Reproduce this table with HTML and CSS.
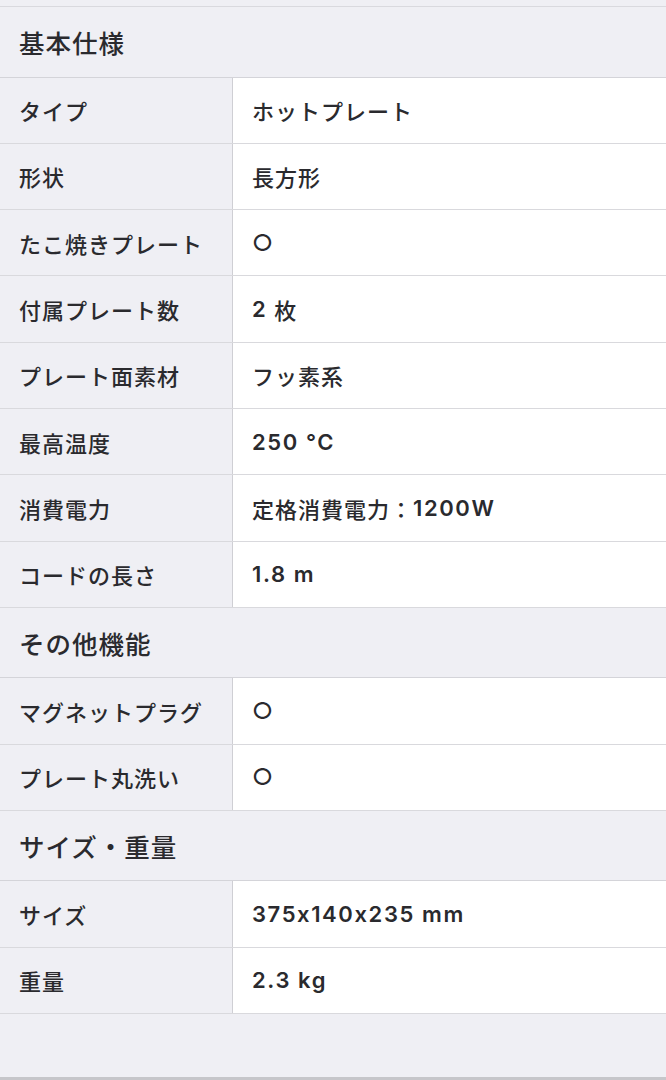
FILE: index.html
```html
<!DOCTYPE html>
<html lang="ja">
<head>
<meta charset="utf-8">
<link rel="stylesheet" href="styles.css">
</head>
<body>
<div class="spec">
  <section class="group">
    <h2 class="group-title">基本仕様</h2>
    <div class="row"><div class="label">タイプ</div><div class="value">ホットプレート</div></div>
    <div class="row"><div class="label">形状</div><div class="value">長方形</div></div>
    <div class="row"><div class="label">たこ焼きプレート</div><div class="value"><span class="mark">○</span></div></div>
    <div class="row"><div class="label">付属プレート数</div><div class="value"><span class="latin">2</span> 枚</div></div>
    <div class="row"><div class="label">プレート面素材</div><div class="value">フッ素系</div></div>
    <div class="row"><div class="label">最高温度</div><div class="value"><span class="latin">250 °C</span></div></div>
    <div class="row"><div class="label">消費電力</div><div class="value">定格消費電力：<span class="latin">1200W</span></div></div>
    <div class="row"><div class="label">コードの長さ</div><div class="value"><span class="latin">1.8 m</span></div></div>
  </section>
  <section class="group">
    <h2 class="group-title">その他機能</h2>
    <div class="row"><div class="label">マグネットプラグ</div><div class="value"><span class="mark">○</span></div></div>
    <div class="row"><div class="label">プレート丸洗い</div><div class="value"><span class="mark">○</span></div></div>
  </section>
  <section class="group">
    <h2 class="group-title">サイズ・重量</h2>
    <div class="row"><div class="label">サイズ</div><div class="value"><span class="latin">375x140x235 mm</span></div></div>
    <div class="row"><div class="label">重量</div><div class="value"><span class="latin">2.3 kg</span></div></div>
  </section>
  <div class="footer-space"></div>
</div>
</body>
</html>
```

FILE: styles.css
```css
html, body {
  margin: 0;
  padding: 0;
  background: #efeff4;
}

body {
  font-family: Inter, "Noto Sans CJK JP", sans-serif;
  color: #2a2a2e;
  width: 666px;
  height: 1080px;
  overflow: hidden;
}

.spec {
  padding-top: 6px;
  border-bottom: 3px solid #c6c6ca;
}

.group {
  display: flex;
  flex-direction: column;
}

.group:first-child {
  border-top: 1px solid #d9d9de;
}

.group-title {
  margin: 0;
  height: 69.5px;
  display: flex;
  align-items: center;
  padding-left: 19px;
  font-size: 25.5px;
  font-weight: 500;
  letter-spacing: 1px;
  border-bottom: 1px solid #d4d4d9;
  background: #efeff4;
}

.row {
  display: grid;
  grid-template-columns: 233px 1fr;
  height: 65.3px;
  border-bottom: 1px solid #d9d9dd;
}

.label,
.value {
  display: flex;
  align-items: center;
  padding-left: 19px;
  font-size: 22px;
  font-weight: 500;
  letter-spacing: 1px;
  white-space: pre;
}

.label {
  background: #efeff4;
  border-right: 1px solid #cfcfd4;
}

.value {
  background: #ffffff;
}

.latin {
  font-size: 22px;
  font-weight: 600;
  letter-spacing: 1.6px;
}

.mark {
  font-size: 23px;
}

.footer-space {
  height: 63px;
  background: #efeff4;
}
```
